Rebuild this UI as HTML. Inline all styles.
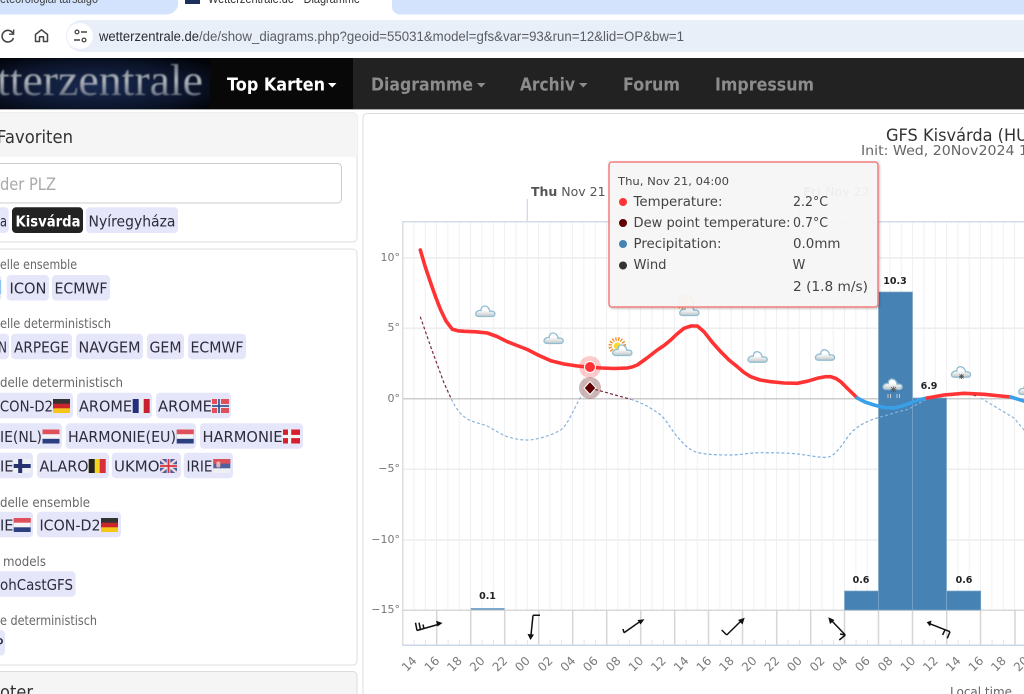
<!DOCTYPE html>
<html lang="de"><head><meta charset="utf-8"><title>Wetterzentrale</title>
<style>
html,body{margin:0;padding:0;background:#fff;width:1024px;height:694px;overflow:hidden}
svg{display:block}
.s{font-family:"DejaVu Sans",sans-serif}
.l{font-family:"Liberation Sans",sans-serif}
.n{font:bold 17.5px "DejaVu Sans",sans-serif}
.p{font:15.5px "DejaVu Sans",sans-serif;fill:#2c2c3c}
.h{font:13.5px "DejaVu Sans",sans-serif;fill:#666}
.y{font:11px "DejaVu Sans",sans-serif;fill:#777}
.x{font:12px "DejaVu Sans",sans-serif;fill:#7a7a7a}
.t{font:13px "DejaVu Sans",sans-serif;fill:#444}
.d{font:bold 9.5px "DejaVu Sans",sans-serif;fill:#222;stroke:#fff;stroke-width:2;paint-order:stroke;text-anchor:middle}
</style></head><body>
<svg xmlns="http://www.w3.org/2000/svg" width="1024" height="694" viewBox="0 0 1024 694">
<defs>
<pattern id="gv" x="403" y="0" width="11.333" height="10" patternUnits="userSpaceOnUse"><rect x="10.5" width="1.7" height="10" fill="#eeeef0"/></pattern>
<pattern id="tk" x="403" y="0" width="11.333" height="10" patternUnits="userSpaceOnUse"><rect x="10.8" width="1" height="10" fill="#ccc"/></pattern>
<linearGradient id="lg" x1="0" x2="0" y1="0" y2="1"><stop offset="0" stop-color="#4f5a70"/><stop offset=".5" stop-color="#b0b4ba"/><stop offset="1" stop-color="#3c4862"/></linearGradient>
<radialGradient id="lb" cx=".45" cy=".55" r=".7"><stop offset="0" stop-color="#18294f"/><stop offset=".65" stop-color="#0b142a"/><stop offset="1" stop-color="#020409"/></radialGradient>
<linearGradient id="cg" x1="0" x2="0" y1="0" y2="1"><stop offset=".4" stop-color="#fff"/><stop offset="1" stop-color="#c4c6c8"/></linearGradient>
<filter id="b"><feGaussianBlur stdDeviation=".8"/></filter>
<filter id="sh" x="-5%" y="-5%" width="110%" height="110%"><feDropShadow dx="1" dy="1" stdDeviation="1" flood-color="#000" flood-opacity=".25"/></filter>
<g id="cloud"><path d="M3.5 11.5H17C20.5 11.5 21 7 17.5 6.3C16.5 6 15.5 6 14.8 6.2C14.2 2.5 11.5.7 9.2 1C7 1.4 6 3.4 6 5.5C3.5 4.9.7 6.7.7 9C.7 10.5 2 11.5 3.5 11.5Z" fill="url(#cg)" stroke="#8fbdd2" stroke-width="1.3"/></g>
<g id="sun"><circle r="3.5" fill="#fdd835"/><circle r="7" fill="none" stroke="#f58a1f" stroke-width="3.6" stroke-dasharray="1.3 1.5"/></g>
<g id="de"><rect width="17" height="14" fill="#f5c518" rx="1"/><rect width="17" height="9.3" fill="#c8252c"/><rect width="17" height="4.7" fill="#333"/></g>
<g id="fr"><rect width="17" height="14" fill="#eee"/><rect width="6" height="14" fill="#22307e"/><rect x="11" width="6" height="14" fill="#c8202f"/></g>
<g id="no"><rect width="17" height="14" fill="#e0505a"/><rect x="5" width="4" height="14" fill="#e8e8f0"/><rect y="5" width="17" height="4" fill="#e8e8f0"/><rect x="6.2" width="1.6" height="14" fill="#2c4a8c"/><rect y="6.2" width="17" height="1.6" fill="#2c4a8c"/></g>
<g id="nl"><rect width="17" height="14" fill="#2c3f80"/><rect width="17" height="9.3" fill="#f4f4f6"/><rect width="17" height="4.7" fill="#e0505a"/></g>
<g id="dk"><rect width="17" height="14" fill="#d8202c"/><rect x="5" width="3.2" height="14" fill="#f4f4f6"/><rect y="5.4" width="17" height="3.2" fill="#f4f4f6"/></g>
<g id="fi"><rect width="17" height="14" fill="#eef0f4"/><rect x="4.5" width="4" height="14" fill="#27336f"/><rect y="5" width="17" height="4" fill="#27336f"/></g>
<g id="be"><rect width="17" height="14" fill="#f5d420"/><rect width="6" height="14" fill="#222"/><rect x="11" width="6" height="14" fill="#d8303a"/></g>
<g id="uk"><rect width="17" height="14" fill="#4a5fa0"/><path d="M0 0L17 14M17 0L0 14" stroke="#f0d8dc" stroke-width="2.4"/><path d="M8.5 0V14M0 7H17" stroke="#f0e8ea" stroke-width="3.6"/><path d="M8.5 0V14M0 7H17" stroke="#d8303a" stroke-width="1.8"/></g>
<g id="rs"><rect width="17" height="14" fill="#eef0f4"/><rect width="17" height="9.3" fill="#4e5f9c"/><rect width="17" height="4.7" fill="#dc5058"/><rect x="3" y="2.5" width="4" height="6" rx="1.5" fill="#e8b0b0"/></g>
</defs>

<!-- browser chrome -->
<rect width="1024" height="58" fill="#fff"/>
<rect width="1024" height="14.5" fill="#d3e3fd"/>
<path d="M178 -2V14.5H166C172 14.5 178 10 178 4ZM392 -2V4C392 10 398 14.5 404 14.5H392Z" fill="#fff"/>
<rect x="178" y="0" width="214" height="15" fill="#fff"/>
<rect x="392" y="0" width="632" height="14.5" rx="8" fill="#d3e3fd"/>
<rect x="392" y="0" width="20" height="8" fill="#d3e3fd"/>
<text x="0" y="3" class="l" font-size="12.5" fill="#444" textLength="98" lengthAdjust="spacingAndGlyphs">eteorologiai társalgó</text>
<rect x="185" y="-4" width="15" height="8" fill="#1d2f5c"/>
<text x="208" y="3" class="l" font-size="12.5" fill="#333" textLength="152" lengthAdjust="spacingAndGlyphs">Wetterzentrale.de - Diagramme</text>
<path d="M13 33.4A5.8 5.8 0 1 0 13.4 38" fill="none" stroke="#444" stroke-width="1.6"/><path d="M13.6 29.5V34.2H9" fill="none" stroke="#444" stroke-width="1.4"/>
<path d="M35.5 41.5V34.5L41.5 29.8L47.5 34.5V41.5H43.5V36.8H39.5V41.5Z" fill="none" stroke="#444" stroke-width="1.5" stroke-linejoin="round"/>
<rect x="66" y="20" width="970" height="32" rx="16" fill="#e9eff9"/>
<circle cx="80" cy="36" r="13" fill="#fff"/>
<circle cx="77" cy="32" r="1.9" fill="none" stroke="#444" stroke-width="1.3"/><path d="M81 32H87M74 40H80" stroke="#444" stroke-width="1.4"/><circle cx="84" cy="40" r="1.9" fill="none" stroke="#444" stroke-width="1.3"/>
<text x="99" y="41" class="l" font-size="13.5" fill="#2a2c30" textLength="100" lengthAdjust="spacingAndGlyphs">wetterzentrale.de</text>
<text x="199" y="41" class="l" font-size="13.5" fill="#5a5e64" textLength="485" lengthAdjust="spacingAndGlyphs">/de/show_diagrams.php?geoid=55031&amp;model=gfs&amp;var=93&amp;run=12&amp;lid=OP&amp;bw=1</text>

<!-- navbar -->
<rect y="58" width="1024" height="51" fill="#222"/>
<rect y="109" width="1024" height="1" fill="#aaa"/>
<rect y="58" width="210" height="51" fill="url(#lb)"/>
<rect x="210" y="58" width="143" height="51" fill="#080808"/>
<text x="-3" y="95" font-family="Liberation Serif,serif" font-size="44" fill="url(#lg)" textLength="206" lengthAdjust="spacingAndGlyphs" filter="url(#b)">tterzentrale</text>
<text x="227" y="90.5" class="n" fill="#fff" textLength="98" lengthAdjust="spacingAndGlyphs">Top Karten</text>
<path d="M328 83H336.5L332.25 87.5Z" fill="#fff"/>
<text x="371" y="90.5" class="n" fill="#8c8c8c" textLength="102" lengthAdjust="spacingAndGlyphs">Diagramme</text>
<path d="M477 83H485.5L481.25 87.5Z" fill="#8c8c8c"/>
<text x="520" y="90.5" class="n" fill="#8c8c8c" textLength="55" lengthAdjust="spacingAndGlyphs">Archiv</text>
<path d="M579 83H587.5L583.25 87.5Z" fill="#8c8c8c"/>
<text x="623" y="90.5" class="n" fill="#8c8c8c" textLength="57" lengthAdjust="spacingAndGlyphs">Forum</text>
<text x="715" y="90.5" class="n" fill="#8c8c8c" textLength="99" lengthAdjust="spacingAndGlyphs">Impressum</text>

<!-- sidebar panels -->
<rect x="-10" y="113" width="367" height="129" rx="4" fill="#fff" stroke="#ddd"/>
<path d="M-10 157V117A4 4 0 0 1 -6 113H353A4 4 0 0 1 357 117V157Z" fill="#f5f5f5"/>
<text x="-3" y="143" class="s" font-size="18" fill="#333" textLength="76" lengthAdjust="spacingAndGlyphs">Favoriten</text>
<rect x="-10" y="163.5" width="351.5" height="39.5" rx="4" fill="#fff" stroke="#ccc"/>
<text x="0" y="190" class="s" font-size="16.5" fill="#aaa" textLength="56" lengthAdjust="spacingAndGlyphs">der PLZ</text>
<g fill="#e6e6fa">
<rect x="-10" y="207.3" width="18.7" height="25.7" rx="4"/>
<rect x="86" y="207.3" width="92" height="25.7" rx="4"/>
<rect x="-10" y="275" width="11.5" height="25.5" rx="4"/><rect x="6.7" y="275" width="42.3" height="25.5" rx="4"/><rect x="52" y="275" width="58" height="25.5" rx="4"/>
<rect x="-10" y="333.7" width="19" height="25.5" rx="4"/><rect x="11" y="333.7" width="61" height="25.5" rx="4"/><rect x="76" y="333.7" width="67" height="25.5" rx="4"/><rect x="147" y="333.7" width="37" height="25.5" rx="4"/><rect x="188" y="333.7" width="58" height="25.5" rx="4"/>
<rect x="-10" y="392.7" width="83" height="25.5" rx="4"/><rect x="77" y="392.7" width="75" height="25.5" rx="4"/><rect x="156" y="392.7" width="75" height="25.5" rx="4"/>
<rect x="-10" y="423.3" width="72" height="25.5" rx="4"/><rect x="65.7" y="423.3" width="130.3" height="25.5" rx="4"/><rect x="200" y="423.3" width="103" height="25.5" rx="4"/>
<rect x="-10" y="452.7" width="43" height="25.5" rx="4"/><rect x="37" y="452.7" width="72" height="25.5" rx="4"/><rect x="111.7" y="452.7" width="69.3" height="25.5" rx="4"/><rect x="183.7" y="452.7" width="49.3" height="25.5" rx="4"/>
<rect x="-10" y="511.7" width="43" height="25.5" rx="4"/><rect x="37" y="511.7" width="84" height="25.5" rx="4"/>
<rect x="-10" y="571.3" width="85.6" height="25.5" rx="4"/>
<rect x="-10" y="630" width="15" height="25.5" rx="4"/>
</g>
<rect x="12" y="207.3" width="71" height="25.7" rx="4" fill="#222"/>
<text x="0" y="226.5" class="p" textLength="7" lengthAdjust="spacingAndGlyphs">a</text>
<text x="15.5" y="226.5" class="s" font-weight="bold" font-size="15" fill="#fff" textLength="65" lengthAdjust="spacingAndGlyphs">Kisvárda</text>
<text x="88.5" y="226.5" class="p" textLength="87" lengthAdjust="spacingAndGlyphs">Nyíregyháza</text>

<rect x="-10" y="249" width="367" height="416" rx="4" fill="none" stroke="#ddd"/>
<rect x="-10" y="671.5" width="367" height="40" rx="4" fill="#f5f5f5" stroke="#ddd"/>
<text x="0" y="698" class="s" font-size="18" fill="#333" textLength="33" lengthAdjust="spacingAndGlyphs">oter</text>
<text class="h" x="0" y="269" textLength="77" lengthAdjust="spacingAndGlyphs">elle ensemble</text>
<text class="h" x="0" y="328" textLength="111" lengthAdjust="spacingAndGlyphs">elle deterministisch</text>
<text class="h" x="0" y="387" textLength="123" lengthAdjust="spacingAndGlyphs">delle deterministisch</text>
<text class="h" x="0" y="507" textLength="90" lengthAdjust="spacingAndGlyphs">delle ensemble</text>
<text class="h" x="3" y="566" textLength="43" lengthAdjust="spacingAndGlyphs">models</text>
<text class="h" x="0" y="625" textLength="97" lengthAdjust="spacingAndGlyphs">e deterministisch</text>
<rect x="-3" y="280" width="4" height="14" fill="#8ec5ef"/>
<text class="p" x="9.5" y="293.5" textLength="37" lengthAdjust="spacingAndGlyphs">ICON</text>
<text class="p" x="54.5" y="293.5" textLength="53" lengthAdjust="spacingAndGlyphs">ECMWF</text>
<text class="p" x="-2" y="352.5" textLength="9" lengthAdjust="spacingAndGlyphs">N</text>
<text class="p" x="14" y="352.5" textLength="55" lengthAdjust="spacingAndGlyphs">ARPEGE</text>
<text class="p" x="78.5" y="352.5" textLength="62" lengthAdjust="spacingAndGlyphs">NAVGEM</text>
<text class="p" x="149.5" y="352.5" textLength="32" lengthAdjust="spacingAndGlyphs">GEM</text>
<text class="p" x="190.5" y="352.5" textLength="53" lengthAdjust="spacingAndGlyphs">ECMWF</text>
<text class="p" x="-4" y="411.5" textLength="57" lengthAdjust="spacingAndGlyphs">ICON-D2</text>
<text class="p" x="79" y="411.5" textLength="53" lengthAdjust="spacingAndGlyphs">AROME</text>
<text class="p" x="158" y="411.5" textLength="54" lengthAdjust="spacingAndGlyphs">AROME</text>
<text class="p" x="0" y="442" textLength="42" lengthAdjust="spacingAndGlyphs">IE(NL)</text>
<text class="p" x="68" y="442" textLength="108" lengthAdjust="spacingAndGlyphs">HARMONIE(EU)</text>
<text class="p" x="202.5" y="442" textLength="80" lengthAdjust="spacingAndGlyphs">HARMONIE</text>
<text class="p" x="0" y="471.5" textLength="13.5" lengthAdjust="spacingAndGlyphs">IE</text>
<text class="p" x="39.5" y="471.5" textLength="49" lengthAdjust="spacingAndGlyphs">ALARO</text>
<text class="p" x="114" y="471.5" textLength="45.5" lengthAdjust="spacingAndGlyphs">UKMO</text>
<text class="p" x="186.5" y="471.5" textLength="26" lengthAdjust="spacingAndGlyphs">IRIE</text>
<text class="p" x="0" y="530.5" textLength="13.5" lengthAdjust="spacingAndGlyphs">IE</text>
<text class="p" x="39.5" y="530.5" textLength="61" lengthAdjust="spacingAndGlyphs">ICON-D2</text>
<text class="p" x="0" y="590" textLength="73" lengthAdjust="spacingAndGlyphs">ohCastGFS</text>
<text class="p" x="-6" y="649" textLength="9.5" lengthAdjust="spacingAndGlyphs">P</text>
<use href="#de" x="53" y="399"/><use href="#fr" x="132.7" y="399"/><use href="#no" x="212" y="399"/>
<use href="#nl" x="42.5" y="429.5"/><use href="#nl" x="176.7" y="429.5"/><use href="#dk" x="283" y="429.5"/>
<use href="#fi" x="13.7" y="459"/><use href="#be" x="88.7" y="459"/><use href="#uk" x="160" y="459"/><use href="#rs" x="213.3" y="459"/>
<use href="#nl" x="13.7" y="518"/><use href="#de" x="101" y="518"/>

<!-- main panel -->
<rect x="363" y="113.5" width="680" height="600" rx="4" fill="#fff" stroke="#ddd"/>
<text x="886" y="141" class="s" font-size="16.5" fill="#333" textLength="142" lengthAdjust="spacingAndGlyphs">GFS Kisvárda (HU</text>
<text x="861" y="155" class="s" font-size="13" fill="#666" textLength="176" lengthAdjust="spacingAndGlyphs">Init: Wed, 20Nov2024 12</text>
<text x="531" y="196" class="s" font-size="12.5" fill="#555"><tspan font-weight="bold">Thu</tspan> Nov 21</text>
<text x="803" y="196" class="s" font-size="12.5" fill="#666"><tspan font-weight="bold">Fri</tspan> Nov 22</text>
<rect x="526.7" y="199" width="1.2" height="23" fill="#ccd6eb"/>
<rect x="799" y="199" width="1.2" height="23" fill="#ccd6eb"/>

<!-- plot grid -->
<rect x="403" y="222" width="621" height="388" fill="url(#gv)"/>
<path d="M403 257.8H1024M403 328.3H1024M403 469.3H1024M403 540H1024" stroke="#eeeef0" stroke-width="1.6"/>
<path d="M403 398.8H1024" stroke="#bbb" stroke-width="1.2"/>
<rect x="402" y="221" width="622" height="1.5" fill="#d4dbea"/>
<rect x="402" y="221" width="1.5" height="425" fill="#ddd"/>
<rect x="403" y="609.5" width="621" height="1.5" fill="#d8d8d8"/>
<rect x="403" y="640" width="621" height="5" fill="url(#tk)"/>
<path d="M436.7 610V645M470.7 610V645M504.7 610V645M538.7 610V645M572.7 610V645M606.7 610V645M640.7 610V645M674.7 610V645M708.5 610V645M742.5 610V645M776.7 610V645M810.7 610V645M844.5 610V645M878.5 610V645M912.5 610V645M946.7 610V645M980.5 610V645M1015 610V645" stroke="#d6d6d6" stroke-width="1.5"/>
<rect x="403" y="644.5" width="621" height="1.5" fill="#ccd6eb"/>

<text class="y" text-anchor="end" x="400" y="261">10°</text>
<text class="y" text-anchor="end" x="400" y="331">5°</text>
<text class="y" text-anchor="end" x="400" y="402">0°</text>
<text class="y" text-anchor="end" x="400" y="472">−5°</text>
<text class="y" text-anchor="end" x="400" y="543">−10°</text>
<text class="y" text-anchor="end" x="400" y="613">−15°</text>

<!-- bars -->
<g fill="#4682b4" stroke="#7ea6c8" stroke-width=".7">
<rect x="470.7" y="608" width="34" height="2" fill="#7fa8cc" stroke="none"/>
<rect x="844.5" y="591" width="34" height="19"/>
<rect x="878.5" y="292" width="34" height="318"/>
<rect x="912.5" y="398" width="34" height="212"/>
<rect x="946.7" y="591" width="34" height="19"/>
</g>
<text class="d" x="487.5" y="599">0.1</text>
<text class="d" x="895" y="284">10.3</text>
<text class="d" x="929" y="389">6.9</text>
<text class="d" x="861" y="583">0.6</text>
<text class="d" x="964" y="583">0.6</text>

<!-- dew point -->
<g fill="none" stroke-width="1.2" stroke-dasharray="3 2.2" stroke-linejoin="round">
<path d="M420.3 316.7L430.7 346.7L444 383L451.3 399" stroke="#7a2a3a"/>
<path d="M451.3 399C456 409 462 417 470.7 420.7C476 423 481 423.5 487 426C495 430 500 434 507.3 436.7C514 439 521 440 527.3 440C536 440 550 436 560.7 430C568 425 574 408 580.7 397" stroke="#8cb4dc"/>
<path d="M590 388L630.7 399.3" stroke="#7a2a3a"/>
<path d="M630.7 399.3C640 402 650 407 660.7 415C668 422 672 431 677.3 436.7C683 443 688 449 695 451.7C702 454 712 455 730.7 455C740 455 750 452.7 760.7 452.7C775 452.7 790 453 797.3 454C808 455 820 458 827.3 457.3C834 456 838 450 840.7 446.7C846 440 850 433 854 430C860 425 863 423.5 867.3 421.7C875 418 885 416 894 413C900 411 906 410.5 910.7 408C916 405 921 402 927 399" stroke="#7fb0e0"/>
<path d="M927 399L944 395L964 393.3L977 396" stroke="#333"/>
<path d="M980.7 398L1014 418L1024 430" stroke="#8cb4dc"/>
</g>

<!-- temperature -->
<g fill="none" stroke-width="3.6" stroke-linejoin="round" stroke-linecap="round">
<path d="M420.3 250L425 266L430.7 283L436 298L440.7 310L446 321L452.3 329.3L458 330.8L464 331.3L476 331.8L487.3 333L497 336.5L507.3 341.7L517 345.5L527.3 349.5L539 355.5L550.7 360.7L564 364L577.3 366L590 367.2L602 368L614 368.5L627.3 368L632 367L637.3 365L647 358L657.3 350L664 345.5L670.7 340L677 334L684 328.3L691 326L697.3 326L704 331.7L712 342L720.7 351.7L729 360L737.3 366.7L744 372.5L750.7 376.7L760 380L770.7 381.7L784 383L797.3 383.3L807 381.3L817.3 378.3L825 376.7L830.7 376.7L836 378.5L840.7 381.7L848 389L857.3 398" stroke="#ff3333"/>
<path d="M857.3 398L865 402L874 405L884 407.5L894 408L902 406L910.7 403L918 400L927.3 398" stroke="#39a0e8"/>
<path d="M927.3 398L944 395L964 393.3L984 394.3L1010.7 397" stroke="#ff3333"/>
<path d="M1010.7 397L1024 401" stroke="#39a0e8"/>
</g>

<!-- hover markers -->
<circle cx="590" cy="367" r="11" fill="#ff3333" fill-opacity=".25"/>
<circle cx="590" cy="367" r="5.5" fill="#ff3333" stroke="#fff" stroke-width="1"/>
<circle cx="590" cy="388" r="11" fill="#5c1010" fill-opacity=".3"/>
<path d="M590 381.5L596 388L590 394.5L584 388Z" fill="#600000" stroke="#fff" stroke-width="1"/>

<!-- weather icons -->
<use href="#cloud" x="475" y="305"/>
<use href="#cloud" x="543.3" y="332"/>
<use href="#sun" x="617.3" y="346"/><use href="#cloud" x="612" y="344"/>
<use href="#sun" x="685.7" y="303"/><use href="#cloud" x="679" y="304"/>
<use href="#cloud" x="747.3" y="350.7"/>
<use href="#cloud" x="814.7" y="348.7"/>
<use href="#cloud" x="882.3" y="378"/>
<path d="M893.5 386.5V392.5M890.5 389.5H896.5M891 387L896 392M896 387L891 392" stroke="#555" stroke-width=".8"/>
<path d="M888 394V398M890.5 394V398M897 394V398M899.5 394V398" stroke="#ccc" stroke-width="1"/>
<use href="#cloud" x="950.7" y="365.7"/>
<path d="M961.5 374V379M959 376.5H964M959.5 374.5L963.5 378.5M963.5 374.5L959.5 378.5" stroke="#555" stroke-width=".8"/>
<use href="#cloud" x="1018" y="383"/>

<!-- wind barbs -->
<g fill="none" stroke="#111" stroke-width="1.5">
<path d="M417 630.5L438 624.5M417 630.5L415.5 622.7M420.5 629.7L419 622.7M424 628.8L423 624.5"/>
<path d="M533 615.3L531 635M533 615.3H540"/>
<path d="M624 632.7L640 621.5M624 632.7L623 629"/>
<path d="M726.7 635L741 621M726.7 635L721.7 630"/>
<path d="M845.3 635L831.5 620.5M845.3 635L839.3 640M845.3 635L840 634"/>
<path d="M950 631.7L930 623.8M950 631.7L947.3 638.3M945 629.8L942.6 635"/>
</g>
<g fill="#111">
<path d="M442.5 623L436 620.8L437.5 626.5Z"/>
<path d="M530.5 640L527.5 634L534 634.5Z"/>
<path d="M644.5 619.3L637.5 620L640.5 624.5Z"/>
<path d="M744.7 617.7L738 620L742.5 624.5Z"/>
<path d="M828.3 617.3L830 624L834.5 620Z"/>
<path d="M926.7 622.3L931.5 620.5L930 626.5Z"/>
</g>

<!-- x labels -->
<text class="x" text-anchor="middle" x="409.3" y="668" transform="rotate(-45 409.3 664)">14</text>
<text class="x" text-anchor="middle" x="432" y="668" transform="rotate(-45 432 664)">16</text>
<text class="x" text-anchor="middle" x="454.6" y="668" transform="rotate(-45 454.6 664)">18</text>
<text class="x" text-anchor="middle" x="477.3" y="668" transform="rotate(-45 477.3 664)">20</text>
<text class="x" text-anchor="middle" x="500" y="668" transform="rotate(-45 500 664)">22</text>
<text class="x" text-anchor="middle" x="522.6" y="668" transform="rotate(-45 522.6 664)">00</text>
<text class="x" text-anchor="middle" x="545.3" y="668" transform="rotate(-45 545.3 664)">02</text>
<text class="x" text-anchor="middle" x="568" y="668" transform="rotate(-45 568 664)">04</text>
<text class="x" text-anchor="middle" x="590.6" y="668" transform="rotate(-45 590.6 664)">06</text>
<text class="x" text-anchor="middle" x="613.3" y="668" transform="rotate(-45 613.3 664)">08</text>
<text class="x" text-anchor="middle" x="636" y="668" transform="rotate(-45 636 664)">10</text>
<text class="x" text-anchor="middle" x="658.6" y="668" transform="rotate(-45 658.6 664)">12</text>
<text class="x" text-anchor="middle" x="681.3" y="668" transform="rotate(-45 681.3 664)">14</text>
<text class="x" text-anchor="middle" x="704" y="668" transform="rotate(-45 704 664)">16</text>
<text class="x" text-anchor="middle" x="726.6" y="668" transform="rotate(-45 726.6 664)">18</text>
<text class="x" text-anchor="middle" x="749.3" y="668" transform="rotate(-45 749.3 664)">20</text>
<text class="x" text-anchor="middle" x="772" y="668" transform="rotate(-45 772 664)">22</text>
<text class="x" text-anchor="middle" x="794.6" y="668" transform="rotate(-45 794.6 664)">00</text>
<text class="x" text-anchor="middle" x="817.3" y="668" transform="rotate(-45 817.3 664)">02</text>
<text class="x" text-anchor="middle" x="840" y="668" transform="rotate(-45 840 664)">04</text>
<text class="x" text-anchor="middle" x="862.6" y="668" transform="rotate(-45 862.6 664)">06</text>
<text class="x" text-anchor="middle" x="885.3" y="668" transform="rotate(-45 885.3 664)">08</text>
<text class="x" text-anchor="middle" x="908" y="668" transform="rotate(-45 908 664)">10</text>
<text class="x" text-anchor="middle" x="930.6" y="668" transform="rotate(-45 930.6 664)">12</text>
<text class="x" text-anchor="middle" x="953.3" y="668" transform="rotate(-45 953.3 664)">14</text>
<text class="x" text-anchor="middle" x="976" y="668" transform="rotate(-45 976 664)">16</text>
<text class="x" text-anchor="middle" x="998.6" y="668" transform="rotate(-45 998.6 664)">18</text>
<text class="x" text-anchor="middle" x="1021.3" y="668" transform="rotate(-45 1021.3 664)">20</text>
<text x="950" y="696" class="s" font-size="12" fill="#666">Local time</text>

<!-- tooltip -->
<rect x="609" y="162" width="269" height="145" rx="3" fill="#f7f7f7" fill-opacity=".93" stroke="#f47c7c" stroke-width="1.5" filter="url(#sh)"/>
<text x="618" y="185" class="s" font-size="11" fill="#444" textLength="111" lengthAdjust="spacingAndGlyphs">Thu, Nov 21, 04:00</text>
<circle cx="623" cy="202" r="4" fill="#ff3333"/>
<circle cx="623" cy="223" r="4" fill="#600000"/>
<circle cx="623" cy="244" r="4" fill="#4682b4"/>
<circle cx="623" cy="265.5" r="4" fill="#333"/>
<text class="t" x="633.5" y="206" textLength="89" lengthAdjust="spacingAndGlyphs">Temperature:</text>
<text class="t" x="633.5" y="227" textLength="157" lengthAdjust="spacingAndGlyphs">Dew point temperature:</text>
<text class="t" x="633.5" y="248" textLength="88" lengthAdjust="spacingAndGlyphs">Precipitation:</text>
<text class="t" x="633.5" y="269" textLength="33" lengthAdjust="spacingAndGlyphs">Wind</text>
<text class="t" x="793" y="206" textLength="35" lengthAdjust="spacingAndGlyphs">2.2°C</text>
<text class="t" x="793" y="227" textLength="35" lengthAdjust="spacingAndGlyphs">0.7°C</text>
<text class="t" x="793" y="248" textLength="47.5" lengthAdjust="spacingAndGlyphs">0.0mm</text>
<text class="t" x="792.5" y="269">W</text>
<text class="t" x="793" y="291" textLength="75" lengthAdjust="spacingAndGlyphs">2 (1.8 m/s)</text>
</svg>
</body></html>
